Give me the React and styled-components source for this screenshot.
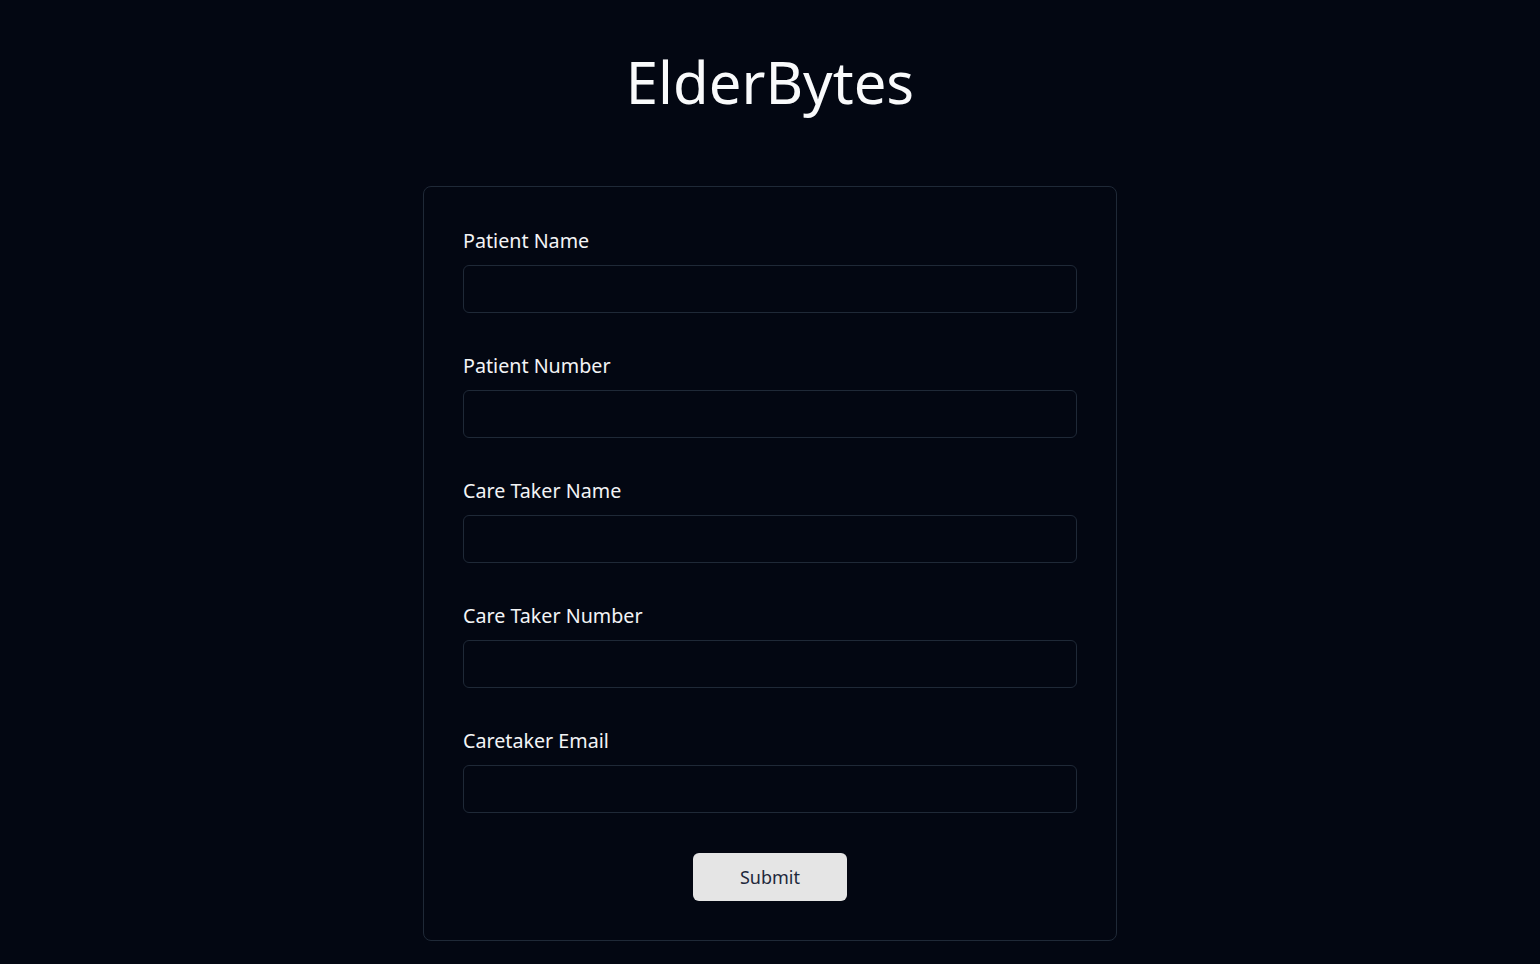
import React from "react";
import styled, { createGlobalStyle } from "styled-components";

const Global = createGlobalStyle`
  html, body { margin: 0; padding: 0; background: #030712; }
  body { font-family: "Noto Sans", "Open Sans", sans-serif; color: #f9fafb; }
  * { box-sizing: border-box; }
`;

const Page = styled.main`
  min-height: 964px;
  display: flex;
  flex-direction: column;
  align-items: center;
  padding-top: 48px;
`;

const Title = styled.h1`
  margin: 0;
  font-size: 58px;
  line-height: 68px;
  font-weight: 400;
  color: #f9fafb;
`;

const Card = styled.form`
  margin-top: 70px;
  width: 694px;
  border: 1px solid #1f2937;
  border-radius: 8px;
  padding: 39px 39px 39px;
  display: flex;
  flex-direction: column;
  gap: 38px;
`;

const Field = styled.div`
  display: flex;
  flex-direction: column;
  gap: 11px;
`;

const Label = styled.label`
  font-size: 19.7px;
  line-height: 28px;
  font-weight: 400;
  color: #f3f4f6;
  padding-top: 1px;
  margin-bottom: -1px;
`;

const Input = styled.input`
  height: 48px;
  width: 100%;
  background: #030712;
  border: 1px solid #1f2937;
  border-radius: 6px;
  color: #f9fafb;
  font: inherit;
  padding: 0 12px;
  outline: none;
`;

const Actions = styled.div`
  display: flex;
  justify-content: center;
  padding-top: 2px;
`;

const Button = styled.button`
  width: 154px;
  height: 48px;
  border: none;
  border-radius: 6px;
  background: #e5e5e5;
  color: #1e293b;
  font-family: inherit;
  font-size: 18px;
  font-weight: 400;
  cursor: pointer;
`;

const fields = ["Patient Name", "Patient Number", "Care Taker Name", "Care Taker Number", "Caretaker Email"];

export default function App() {
  return (
    <>
      <Global />
      <Page>
        <Title>ElderBytes</Title>
        <Card onSubmit={(e) => e.preventDefault()}>
          {fields.map((f) => (
            <Field key={f}>
              <Label>{f}</Label>
              <Input type="text" />
            </Field>
          ))}
          <Actions>
            <Button type="submit">Submit</Button>
          </Actions>
        </Card>
      </Page>
    </>
  );
}
